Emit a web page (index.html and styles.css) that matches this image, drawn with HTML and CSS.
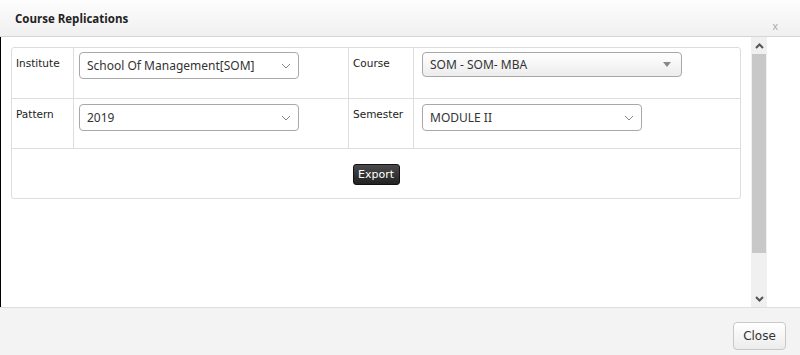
FILE: index.html
```html
<!DOCTYPE html>
<html lang="en">
<head>
    <meta charset="UTF-8">
    <title>Course Replications</title>
    <link rel="stylesheet" href="styles.css">
</head>
<body>
    <div class="dialog">
        <div class="dlg-head">
            <span class="dlg-title">Course Replications</span>
            <span class="dlg-x">x</span>
        </div>
        <div class="dlg-body">
            <div class="dlg-content">
                <table class="form-table">
                    <tr class="row-first">
                        <td class="lbl lbl-1">Institute</td>
                        <td class="fld fld-1">
                            <div class="sel sel-wide">
                                <span>School Of Management[SOM]</span>
                                <svg class="chev" width="10" height="6" viewBox="0 0 10 6"><path d="M1 1 L5 5 L9 1" fill="none" stroke="#888" stroke-width="1"/></svg>
                            </div>
                        </td>
                        <td class="lbl lbl-2">Course</td>
                        <td class="fld fld-2">
                            <div class="sel sel-course">
                                <span>SOM - SOM- MBA</span>
                                <svg class="tri" width="8" height="5" viewBox="0 0 8 5"><path d="M0 0 L8 0 L4 5 Z" fill="#888"/></svg>
                            </div>
                        </td>
                    </tr>
                    <tr>
                        <td class="lbl">Pattern</td>
                        <td class="fld">
                            <div class="sel sel-wide">
                                <span>2019</span>
                                <svg class="chev" width="10" height="6" viewBox="0 0 10 6"><path d="M1 1 L5 5 L9 1" fill="none" stroke="#888" stroke-width="1"/></svg>
                            </div>
                        </td>
                        <td class="lbl">Semester</td>
                        <td class="fld fld-2">
                            <div class="sel sel-wide">
                                <span>MODULE II</span>
                                <svg class="chev" width="10" height="6" viewBox="0 0 10 6"><path d="M1 1 L5 5 L9 1" fill="none" stroke="#888" stroke-width="1"/></svg>
                            </div>
                        </td>
                    </tr>
                    <tr>
                        <td class="btn-cell" colspan="4">
                            <button class="btn-export">Export</button>
                        </td>
                    </tr>
                </table>
            </div>
            <div class="scrollbar">
                <div class="sb-arrow">
                    <svg width="9" height="6" viewBox="0 0 9 6"><path d="M1 5 L4.5 1.5 L8 5" fill="none" stroke="#555" stroke-width="2"/></svg>
                </div>
                <div class="sb-track">
                    <div class="sb-thumb"></div>
                </div>
                <div class="sb-arrow">
                    <svg width="9" height="6" viewBox="0 0 9 6"><path d="M1 1 L4.5 4.5 L8 1" fill="none" stroke="#555" stroke-width="2"/></svg>
                </div>
            </div>
        </div>
        <div class="dlg-foot">
            <button class="btn-close">Close</button>
        </div>
    </div>
</body>
</html>
```

FILE: styles.css
```css
*{
    margin:0;
    padding:0;
    box-sizing: border-box;
}
body{
    width: 800px;
    height: 355px;
    overflow: hidden;
    background-color: #fff;
    font-family: "DejaVu Sans", Tahoma, sans-serif;
}
.dialog{
    display: flex;
    flex-direction: column;
    height: 355px;
}
/* head */
.dlg-head{
    height: 37px;
    border-bottom: 1px solid #d6d6d6;
    background: linear-gradient(#fdfdfd, #f0f0f0);
    display: flex;
    justify-content: space-between;
    align-items: flex-start;
    padding: 0 22px 0 15px;
}
.dlg-title{
    font-family: "Open Sans", sans-serif;
    font-weight: bold;
    font-size: 11.5px;
    color: #222;
    margin-top: 11px;
}
.dlg-x{
    font-family: "Liberation Sans", sans-serif;
    font-size: 11px;
    color: #aaa;
    margin-top: 20px;
}
/* body */
.dlg-body{
    height: 270px;
    display: flex;
    border-left: 1px solid #000;
    padding-right: 33px;
}
.dlg-content{
    flex: 1;
    padding: 10px 10px 0 10px;
}
.form-table{
    width: 730px;
    border-collapse: separate;
    border-spacing: 0;
    border: 1px solid #ddd;
    border-radius: 3px;
}
.form-table td{
    border-bottom: 1px solid #ddd;
    vertical-align: top;
    height: 50px;
}
.form-table .row-first td{
    height: 51px;
}
.form-table tr:last-child td{
    border-bottom: none;
    height: 49px;
}
.lbl{
    font-size: 10.5px;
    color: #222;
    padding: 9px 4px 0 4px;
    border-right: 1px solid #ddd;
}
.lbl-1{ width: 62px; }
.lbl-2{ width: 65px; }
.fld{
    border-right: 1px solid #ddd;
    padding: 5px 0 0 5px;
}
.row-first .fld{
    padding-top: 4px;
}
.fld-1{ width: 275px; }
.form-table td.fld-2{
    border-right: none;
    padding-left: 8px;
}
.sel{
    width: 220px;
    height: 27px;
    border: 1px solid #a8a8a8;
    border-radius: 4px;
    background-color: #fff;
    display: flex;
    align-items: center;
    justify-content: space-between;
    padding: 0 7px 0 7px;
    font-family: "Noto Sans", sans-serif;
    font-size: 12px;
    color: #333;
}
.sel-course{
    width: 260px;
    height: 25px;
    background: linear-gradient(#fff, #ececec);
    padding-right: 10px;
}
.btn-cell{
    text-align: center;
    padding-top: 14px;
}
.btn-export{
    font-family: "DejaVu Sans", sans-serif;
    font-size: 11px;
    color: #fff;
    width: 47px;
    height: 21px;
    border: 1px solid #111;
    border-radius: 3px;
    background: linear-gradient(#4a4a4a, #222);
}
/* fake scrollbar */
.scrollbar{
    width: 17px;
    background-color: #f0f0f0;
    display: flex;
    flex-direction: column;
}
.sb-arrow{
    height: 17px;
    display: flex;
    align-items: center;
    justify-content: center;
}
.sb-track{
    flex: 1;
}
.sb-thumb{
    height: 199px;
    margin: 0 1px;
    background-color: #c8c8c8;
}
/* foot */
.dlg-foot{
    flex: 1;
    border-top: 1px solid #ddd;
    background-color: #f3f3f3;
    display: flex;
    justify-content: flex-end;
    align-items: flex-start;
    padding: 14px 14px 0 0;
}
.btn-close{
    font-family: "DejaVu Sans", sans-serif;
    font-size: 12px;
    color: #333;
    width: 53px;
    height: 28px;
    border: 1px solid #c8c8c8;
    border-radius: 4px;
    background: linear-gradient(#fff, #ececec);
}
```
